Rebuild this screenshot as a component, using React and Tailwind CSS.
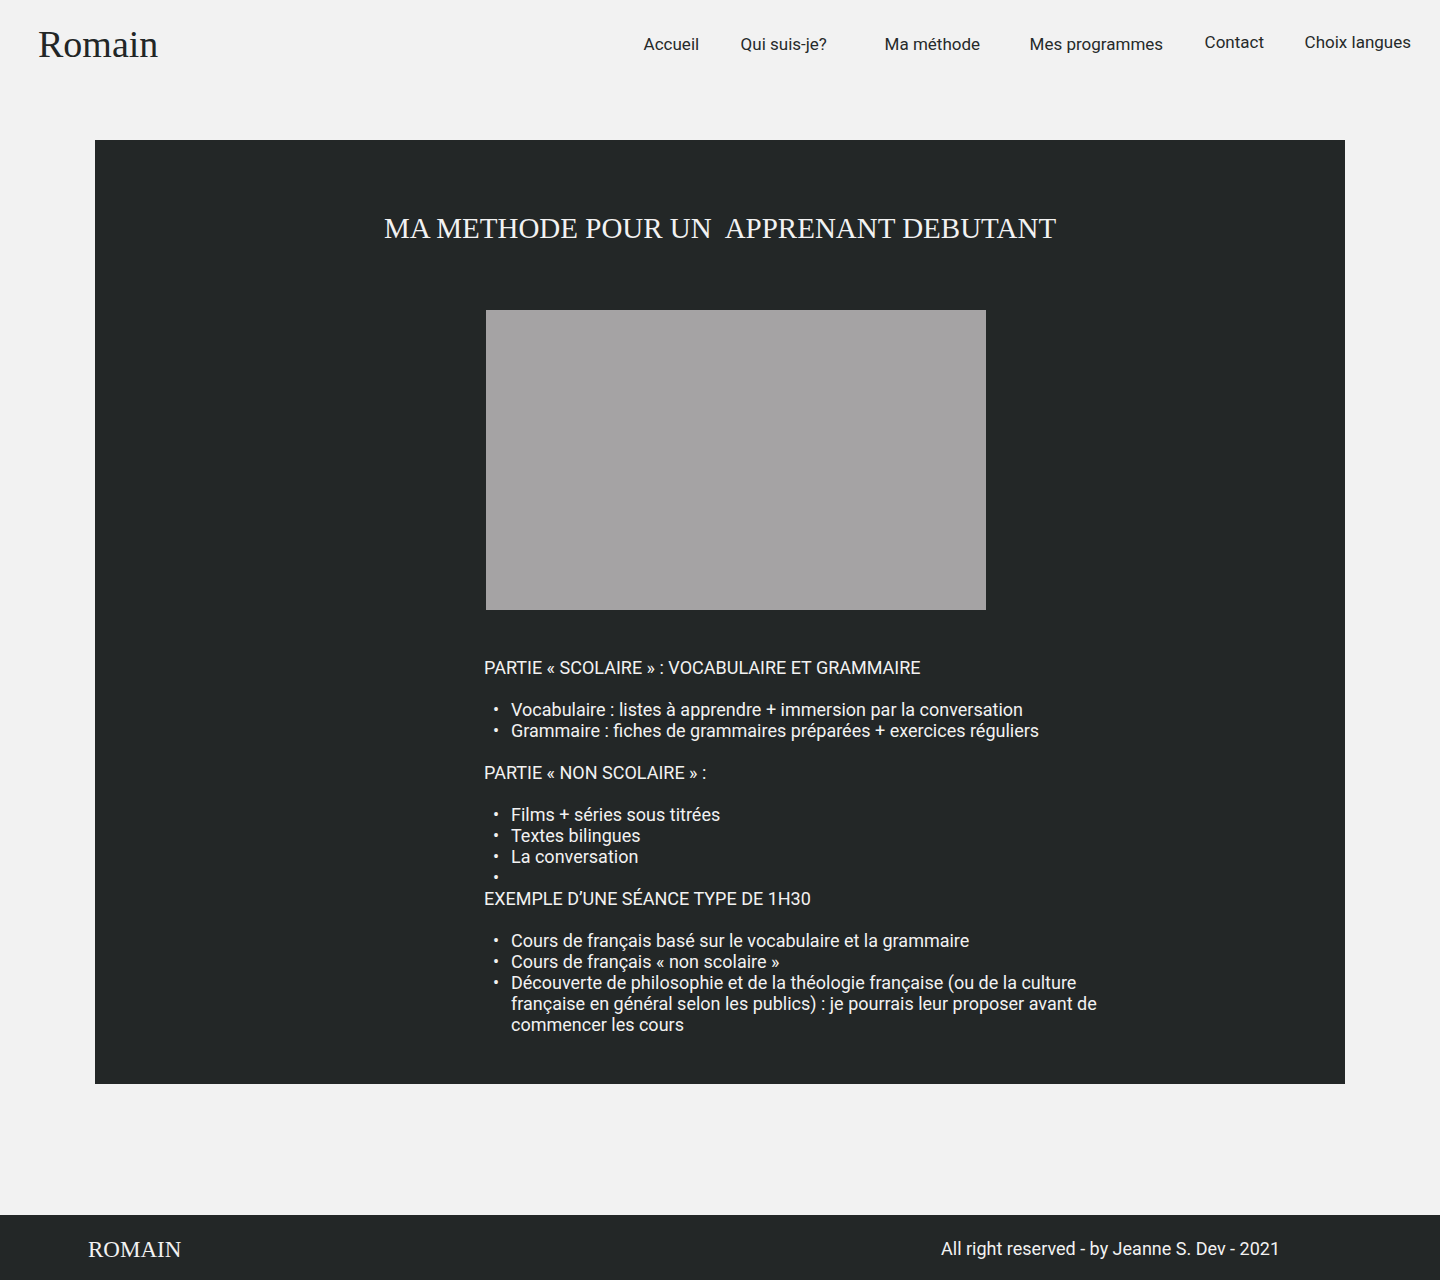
import React from 'react';

const NAV = [
  { label: 'Accueil', w: 'w-[97px]', up: false },
  { label: 'Qui suis-je?', w: 'w-[144px]', up: false },
  { label: 'Ma méthode', w: 'w-[145px]', up: false },
  { label: 'Mes programmes', w: 'w-[175px]', up: false },
  { label: 'Contact', w: 'w-[100px]', up: true },
  { label: 'Choix langues', w: '', up: true },
];

const serif = { fontFamily: '"Liberation Serif", "DejaVu Serif", serif' };

function Bullets({ items, last }) {
  return (
    <ul className={last ? 'mt-[21px]' : 'my-[21px]'}>
      {items.map((t, i) => (
        <li key={i} className="flex">
          <span className="w-[27px] shrink-0 pl-[9px]">•</span>
          <span>{t}</span>
        </li>
      ))}
    </ul>
  );
}

export default function App() {
  return (
    <div className="min-h-screen bg-[#f2f2f2] flex flex-col font-['Roboto',sans-serif]">
      {/* header */}
      <header className="h-[90px] flex items-center justify-between pl-[38px] pr-[29px]">
        <div className="text-[38px] leading-none text-[#222626] -mt-[2px]" style={serif}>
          Romain
        </div>
        <nav className="flex items-center text-[17px] text-[#262a2a]">
          {NAV.map((n) => (
            <span key={n.label} className={`${n.w} ${n.up ? '-mt-[4px]' : ''}`}>
              {n.label}
            </span>
          ))}
        </nav>
      </header>

      {/* content */}
      <main className="px-[95px] pt-[50px]">
        <section className="bg-[#232727] h-[944px] pt-[68px] text-[#f2f2f2]">
          <h1 className="text-center text-[29px] leading-[40px] whitespace-pre" style={serif}>
            {'MA METHODE POUR UN  APPRENANT DEBUTANT'}
          </h1>

          <div className="ml-[391px] mt-[62px] w-[500px] h-[300px] bg-[#a5a3a4]" />

          <div className="ml-[389px] mt-[47px] w-[640px] text-[18px] leading-[21px]">
            <p>PARTIE « SCOLAIRE » : VOCABULAIRE ET GRAMMAIRE</p>
            <Bullets
              items={[
                'Vocabulaire : listes à apprendre + immersion par la conversation',
                'Grammaire : fiches de grammaires préparées + exercices réguliers',
              ]}
            />
            <p>PARTIE « NON SCOLAIRE » :</p>
            <ul className="mt-[21px]">
              {['Films + séries sous titrées', 'Textes bilingues', 'La conversation', '\u00a0'].map((t, i) => (
                <li key={i} className="flex">
                  <span className="w-[27px] shrink-0 pl-[9px]">•</span>
                  <span>{t}</span>
                </li>
              ))}
            </ul>
            <p>EXEMPLE D’UNE SÉANCE TYPE DE 1H30</p>
            <Bullets
              last
              items={[
                'Cours de français basé sur le vocabulaire et la grammaire',
                'Cours de français « non scolaire »',
                'Découverte de philosophie et de la théologie française (ou de la culture française en général selon les publics) : je pourrais leur proposer avant de commencer les cours',
              ]}
            />
          </div>
        </section>
      </main>

      {/* footer */}
      <footer className="mt-[131px] h-[65px] bg-[#232727] flex items-center justify-between pl-[88px] pr-[160px] text-[#f2f2f2]">
        <div className="text-[23px] leading-none mt-[4px]" style={serif}>
          ROMAIN
        </div>
        <div className="text-[18px] mt-[2px]">All right reserved - by Jeanne S. Dev - 2021</div>
      </footer>
    </div>
  );
}
